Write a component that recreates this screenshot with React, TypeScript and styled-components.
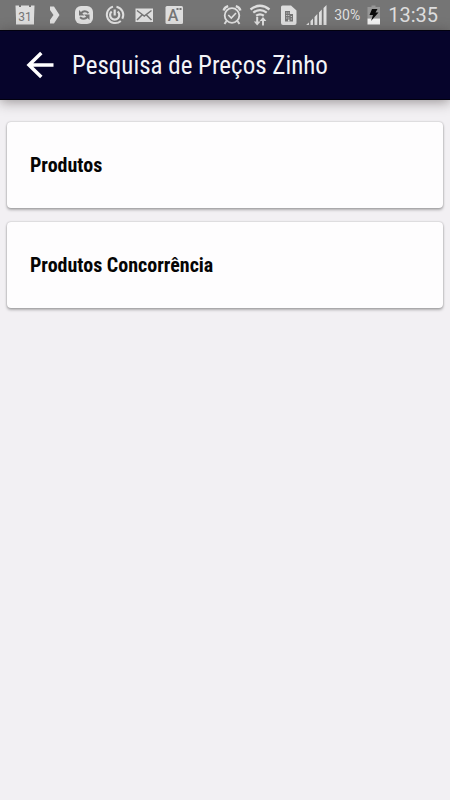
import React from "react";
import styled, { createGlobalStyle } from "styled-components";

const GlobalStyle = createGlobalStyle`
  *, *::before, *::after { box-sizing: border-box; }
  body {
    margin: 0;
    background: #f2f0f3;
    font-family: "Roboto Condensed", "Liberation Sans Narrow", Roboto, sans-serif;
  }
`;

const Screen = styled.div`
  display: flex;
  flex-direction: column;
  min-height: 100vh;
`;

const StatusBar = styled.div`
  display: flex;
  align-items: center;
  justify-content: space-between;
  height: 30px;
  padding: 0 12px 0 15px;
  background: #757575;
  color: #dedede;
  font-family: Roboto, sans-serif;
`;

const StatusGroup = styled.div<{ $gap: number }>`
  display: flex;
  align-items: center;
  gap: ${(p) => p.$gap}px;
`;

const StatusIcon = styled.svg<{ $width?: number }>`
  display: block;
  width: ${(p) => p.$width ?? 20}px;
  height: 22px;
  flex: none;
  overflow: visible;
`;

const Percent = styled.span`
  font-size: 14px;
  line-height: 30px;
`;

const Clock = styled.time`
  font-size: 20px;
  line-height: 30px;
`;

const AppBar = styled.header`
  display: flex;
  align-items: center;
  gap: 16px;
  height: 70px;
  padding: 0 24px;
  background: #06042b;
  border-top: 1px solid #02010f;
  border-bottom: 1px solid #02010f;
  color: #f4f4f8;
  box-shadow: 0 2px 12px rgba(40, 30, 30, 0.45);
`;

const BackButton = styled.button`
  display: flex;
  align-items: center;
  justify-content: center;
  width: 32px;
  height: 32px;
  padding: 0;
  border: 0;
  background: none;
  color: #ffffff;
  cursor: pointer;
`;

const Title = styled.h1`
  margin: 0;
  padding-top: 2px;
  font-size: 25px;
  line-height: 32px;
  font-weight: 400;
  white-space: nowrap;
`;

const Menu = styled.main`
  display: flex;
  flex-direction: column;
  gap: 14px;
  padding: 22px 7px;
`;

const Card = styled.button`
  display: flex;
  align-items: center;
  width: 100%;
  height: 86px;
  padding: 0 23px;
  border: 0;
  border-radius: 4px;
  background: #fefdfe;
  box-shadow: 0 2px 3px rgba(0, 0, 0, 0.28), 0 0 2px rgba(0, 0, 0, 0.28);
  color: #050505;
  font-family: inherit;
  font-size: 20px;
  line-height: 24px;
  font-weight: 700;
  text-align: left;
  cursor: pointer;
`;

const ink = "#dedede";
const bar = "#757575";

function CalendarIcon() {
  return (
    <StatusIcon viewBox="0 0 20 22" aria-hidden="true">
      <path d="M0.500 1.500H4V3h2V1.500h8V3h2V1.500h3.500l-.5 13v6H1v-6Z" fill={ink} />
      <text x="10" y="16.500" textAnchor="middle" fontSize="12" fontFamily="Roboto, sans-serif" fill={bar}>31</text>
    </StatusIcon>
  );
}

function ChevronIcon() {
  return (
    <StatusIcon viewBox="0 0 20 22" aria-hidden="true">
      <path d="M5 2.500h4L14.500 11 9 19.500H5V16l3.500-5L5 6Z" fill={ink} />
    </StatusIcon>
  );
}

function SyncIcon() {
  return (
    <StatusIcon viewBox="0 0 20 22" aria-hidden="true">
      <rect x="0" y="2" width="18" height="18" rx="6" fill={ink} />
      <path d="M6 9.200Q9.500 5.500 13.500 9M12.500 13Q9 16.500 5 13.200" fill="none" stroke={bar} strokeWidth="2" />
      <path d="M4 6v5.500h5.500ZM14.500 16v-5.500H9Z" fill={bar} />
    </StatusIcon>
  );
}

function PowerIcon() {
  return (
    <StatusIcon viewBox="0 0 20 22" aria-hidden="true" fill="none" stroke={ink}>
      <path d="M8 2.600A8.400 8.400 0 1 0 15.800 17M17.300 14.800A8.400 8.400 0 0 0 11.500 2.700" strokeWidth="2" />
      <path d="M6.700 7.500a4.600 4.600 0 1 0 6 0" strokeWidth="2.200" />
      <path d="M9.700 5.500v6" strokeWidth="2.200" />
    </StatusIcon>
  );
}

function MailIcon() {
  return (
    <StatusIcon viewBox="0 0 20 22" aria-hidden="true">
      <rect x="0.500" y="4.500" width="17.500" height="13.500" fill={ink} />
      <path d="M2 6.500 9.250 12l7.250-5.500M2 16l5-5M16.500 16l-5-5" fill="none" stroke={bar} strokeWidth="1.500" />
    </StatusIcon>
  );
}

function LetterIcon() {
  return (
    <StatusIcon viewBox="0 0 20 22" aria-hidden="true">
      <rect x="0.500" y="2" width="17.500" height="18" rx="1.500" fill={ink} />
      <text x="8" y="17" textAnchor="middle" fontSize="16" fontWeight="500" fontFamily="Roboto, sans-serif" fill={bar}>A</text>
      <path d="M11.500 4h2v2h-2zM14.500 4h2v2h-2z" fill={bar} />
    </StatusIcon>
  );
}

function AlarmIcon() {
  return (
    <StatusIcon viewBox="0 0 20 22" aria-hidden="true" fill="none" stroke={ink}>
      <circle cx="10" cy="11.500" r="7.300" strokeWidth="1.800" />
      <path d="M1.600 6.500Q2.600 3 6.200 2.200M18.400 6.500Q17.400 3 13.800 2.200" strokeWidth="2.400" />
      <path d="m6.300 11 3 3 4.700-5" strokeWidth="1.600" />
      <path d="m4.500 17-2 3M15.500 17l2 3" strokeWidth="2" />
    </StatusIcon>
  );
}

function WifiIcon() {
  return (
    <StatusIcon $width={22} viewBox="0 0 22 22" aria-hidden="true" fill="none" stroke={ink}>
      <path d="M1.500 5.500Q11-2 20.500 5.500M4.300 8.700Q11 3.500 17.700 8.700M7.200 11.800Q11 9 14.800 11.800" strokeWidth="2.300" />
      <path d="M8.200 13v6M14 16v5.500" strokeWidth="2" />
      <path d="M4.800 17.500h6.800L8.200 21.500ZM10.600 17h6.800L14 13Z" fill={ink} stroke="none" />
    </StatusIcon>
  );
}

function SimIcon() {
  return (
    <StatusIcon viewBox="-2 0 20 22" aria-hidden="true">
      <path d="M2.500 1.500h8.500l5.500 5V19a2 2 0 0 1-2 2H3a2 2 0 0 1-2-2V3a1.500 1.500 0 0 1 1.500-1.500Z" fill={ink} />
      <path d="M5 7h5v3h3v7.500H5Z" fill={bar} />
      <path d="M6.300 8.500h1v1h-1zm2 0h1v1h-1zm-2 2.500h1v1h-1zm2 0h1v1h-1zm2.500 1h1v1h-1zm-4.500 1.500h1v1h-1zm2 0h1v1h-1zm2.500 1h1v1h-1zM8 15.500h1.500v2H8z" fill={ink} />
    </StatusIcon>
  );
}

function SignalIcon() {
  return (
    <StatusIcon $width={22} viewBox="0 0 22 22" aria-hidden="true" fill={ink}>
      <path d="M1.500 20.500 4 18.500V21H1.500zM5.500 17 8 14.500V21H5.500zM9.500 13l2.800-3V21H9.500zM14 8.500l2.800-3V21H14zM18.500 4l3-3v20h-3z" />
    </StatusIcon>
  );
}

function BatteryIcon() {
  return (
    <StatusIcon $width={14} viewBox="0 0 14 22" aria-hidden="true">
      <path d="M4.500 1.500h4V3h4.500v11.500H0.500V3h4Z" fill="#979797" />
      <path d="M0.500 14.500H13v6H0.500Z" fill="#f2f2f2" />
      <path d="M5 5h5.500L8.500 8.500h3L4 17l2-6H2.500Z" fill="#0c0c0c" />
    </StatusIcon>
  );
}

function BackArrow() {
  return (
    <svg width="32" height="32" viewBox="0 0 32 32" fill="none" stroke="currentColor" strokeWidth="3.500" aria-hidden="true">
      <path d="M17.300 4 5 16l12.300 12M4.500 16h25" />
    </svg>
  );
}

const entries = ["Produtos", "Produtos Concorrência"];

export default function App() {
  return (
    <Screen>
      <GlobalStyle />
      <StatusBar>
        <StatusGroup $gap={10}>
          <CalendarIcon />
          <ChevronIcon />
          <SyncIcon />
          <PowerIcon />
          <MailIcon />
          <LetterIcon />
        </StatusGroup>
        <StatusGroup $gap={7}>
          <AlarmIcon />
          <WifiIcon />
          <SimIcon />
          <SignalIcon />
          <Percent>30%</Percent>
          <BatteryIcon />
          <Clock>13:35</Clock>
        </StatusGroup>
      </StatusBar>
      <AppBar>
        <BackButton type="button" aria-label="Voltar">
          <BackArrow />
        </BackButton>
        <Title>Pesquisa de Preços Zinho</Title>
      </AppBar>
      <Menu>
        {entries.map((label) => (
          <Card key={label} type="button">
            {label}
          </Card>
        ))}
      </Menu>
    </Screen>
  );
}
